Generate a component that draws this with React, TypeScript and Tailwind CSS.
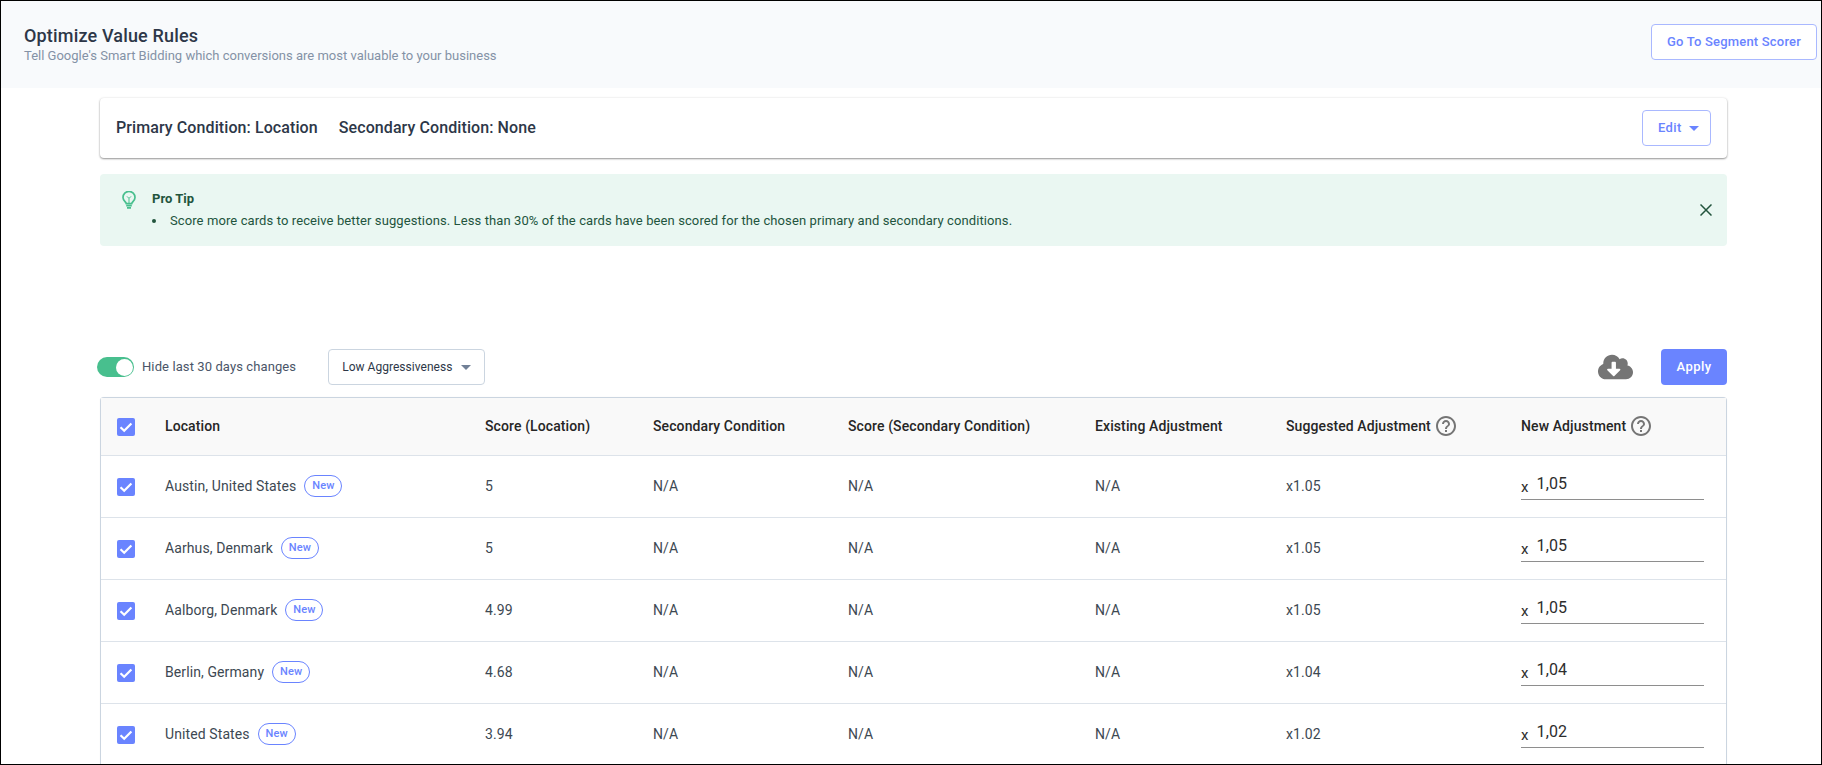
import React from "react";
import { FaCloudDownloadAlt } from "react-icons/fa";
import { MdHelpOutline } from "react-icons/md";

const rows = [
  { location: "Austin, United States", score: "5", suggested: "x1.05", value: "1,05" },
  { location: "Aarhus, Denmark", score: "5", suggested: "x1.05", value: "1,05" },
  { location: "Aalborg, Denmark", score: "4.99", suggested: "x1.05", value: "1,05" },
  { location: "Berlin, Germany", score: "4.68", suggested: "x1.04", value: "1,04" },
  { location: "United States", score: "3.94", suggested: "x1.02", value: "1,02" },
];

function Caret({ className }: { className: string }) {
  return (
    <svg viewBox="0 0 10 5" className={className} fill="currentColor">
      <path d="M0 0h10L5 5z" />
    </svg>
  );
}

function Checkbox() {
  return (
    <span className="flex h-[18px] w-[18px] items-center justify-center rounded-[2px] bg-[#6a84ff]">
      <svg viewBox="0 0 18 18" className="h-[18px] w-[18px]" fill="none" stroke="white" strokeWidth="2.2">
        <path d="M3.5 9.2l3.7 3.6 7.2-7.3" />
      </svg>
    </span>
  );
}

function BulbIcon() {
  return (
    <svg viewBox="0 0 14 18" className="mt-[1px] h-[18px] w-[14px] text-[#48bf8e]" fill="none" stroke="currentColor" strokeWidth="1.7">
      <path d="M4.3 12.6C4 10.9 1 9.7 1 6.4a6 6 0 0 1 12 0c0 3.3-3 4.5-3.3 6.2z" />
      <path d="M5 5.4L7 7.4l2-2M7 7.4v5" strokeWidth="1" />
      <path d="M4.2 14.7h5.6M5 16.8h4" strokeWidth="1.7" />
    </svg>
  );
}

export default function App() {
  return (
    <div className="box-border flex h-[765px] w-[1822px] flex-col overflow-hidden border border-black bg-white font-[family-name:Roboto,sans-serif] text-[#3d4852]">
      {/* Page header */}
      <header className="flex h-[87px] shrink-0 items-start justify-between bg-[#f8fafc] pr-1">
        <div className="pl-[23px] pt-[23px]">
          <h1 className="text-[18px] font-medium leading-[24px] tracking-[0.17px] text-[#2d3748]">Optimize Value Rules</h1>
          <p className="text-[13px] leading-[16px] text-[#8492a6]">
            Tell Google's Smart Bidding which conversions are most valuable to your business
          </p>
        </div>
        <button className="mt-[23px] h-[36px] w-[166px] rounded-[4px] border border-[#a9b8ff] bg-white text-[13px] font-medium tracking-[0.2px] text-[#6a84ff]">
          Go To Segment Scorer
        </button>
      </header>

      <main className="flex flex-1 flex-col pl-[99px] pr-[94px]">
        {/* Conditions */}
        <section className="mt-[10px] flex h-[60px] shrink-0 items-center justify-between rounded-[4px] bg-white pl-4 pr-4 shadow-[0_1px_2px_rgba(0,0,0,0.4),0_0_3px_rgba(0,0,0,0.08)]">
          <div className="flex gap-[21px] text-[16px] font-medium tracking-[0.09px] text-[#2d3748]">
            <span>Primary Condition: Location</span>
            <span>Secondary Condition: None</span>
          </div>
          <button className="flex h-[36px] w-[69px] items-center gap-[7px] rounded-[4px] border border-[#a9b8ff] pl-[15px] text-[13px] font-medium tracking-[0.4px] text-[#6a84ff]">
            Edit
            <Caret className="h-[5px] w-[10px]" />
          </button>
        </section>

        {/* Pro tip */}
        <section className="mt-[16px] flex h-[72px] shrink-0 items-center justify-between rounded-[4px] bg-[#eaf7f2] pl-[22px] pr-[15px] text-[#22543d]">
          <div className="flex gap-[16px] self-start pt-4">
            <BulbIcon />
            <div>
              <div className="text-[13px] font-bold leading-[18px]">Pro Tip</div>
              <ul className="mt-[4px] list-inside list-disc text-[13px] leading-[18px] tracking-[0.1px]">
                <li>Score more cards to receive better suggestions. Less than 30% of the cards have been scored for the chosen primary and secondary conditions.</li>
              </ul>
            </div>
          </div>
          <svg viewBox="0 0 12 12" className="h-3 w-3" fill="none" stroke="currentColor" strokeWidth="1.5">
            <path d="M0.5 0.5l11 11M11.5 0.5l-11 11" />
          </svg>
        </section>

        {/* Toolbar */}
        <div className="mt-[103px] flex h-[36px] shrink-0 items-center">
          <div className="-ml-[3px] flex items-center">
            <span className="flex h-[20px] w-[37px] items-center justify-end rounded-full bg-[#48bf8e] pr-[1px]">
              <span className="h-[17px] w-[17px] rounded-full bg-white" />
            </span>
            <span className="ml-2 text-[13px] tracking-[0.1px] text-[#4a5568]">Hide last 30 days changes</span>
          </div>
          <button className="ml-[32px] flex h-[36px] w-[157px] items-center justify-between whitespace-nowrap rounded-[4px] border border-[#cbd5e0] pl-[13px] pr-[13px] text-[12px] tracking-[0.03px] text-[#2d3748]">
            Low Aggressiveness
            <Caret className="h-[5px] w-[10px] text-[#718096]" />
          </button>
          <FaCloudDownloadAlt className="ml-auto h-[28px] w-[35px] text-[#757575]" />
          <button className="ml-[28px] h-[36px] w-[66px] rounded-[4px] bg-[#6a84ff] text-[13px] font-medium tracking-[0.4px] text-white">
            Apply
          </button>
        </div>

        {/* Table */}
        <div className="mt-[12px] rounded-t-[4px] border border-b-0 border-[#cbd5e0] shadow-[0_0_1px_rgba(0,0,0,0.1)]">
          <table className="w-full table-fixed border-collapse text-left text-[14px] tracking-[0.1px]">
            <colgroup>
              <col className="w-[64px]" />
              <col className="w-[320px]" />
              <col className="w-[168px]" />
              <col className="w-[195px]" />
              <col className="w-[247px]" />
              <col className="w-[191px]" />
              <col className="w-[235px]" />
              <col />
            </colgroup>
            <thead>
              <tr className="h-[57px] border-b border-[#dde3ea] bg-[#f9f9f9] text-[#262626]">
                <th className="pl-4 pt-[2px] font-normal"><Checkbox /></th>
                <th className="font-medium">Location</th>
                <th className="font-medium">Score (Location)</th>
                <th className="font-medium">Secondary Condition</th>
                <th className="font-medium">Score (Secondary Condition)</th>
                <th className="font-medium">Existing Adjustment</th>
                <th className="font-medium">
                  <span className="flex items-center gap-[3px]">Suggested Adjustment <MdHelpOutline className="h-[24px] w-[24px] text-[#757575]" /></span>
                </th>
                <th className="font-medium">
                  <span className="flex items-center gap-[3px]">New Adjustment <MdHelpOutline className="h-[24px] w-[24px] text-[#757575]" /></span>
                </th>
              </tr>
            </thead>
            <tbody>
              {rows.map((row) => (
                <tr key={row.location} className="h-[62px] border-b border-[#dde3ea]">
                  <td className="pl-4 pt-[2px]"><Checkbox /></td>
                  <td>
                    <span className="flex items-center gap-2">
                      {row.location}
                      <span className="flex h-[22px] w-[38px] items-center justify-center rounded-full border border-[#6a84ff] text-[11px] font-medium text-[#6a84ff]">New</span>
                    </span>
                  </td>
                  <td>{row.score}</td>
                  <td>N/A</td>
                  <td>N/A</td>
                  <td>N/A</td>
                  <td>{row.suggested}</td>
                  <td>
                    <div className="flex h-[28px] w-[183px] border-b border-[#8e8e8e] text-[#2d2d2d]">
                      <span className="mt-[4px] text-[15px]">x</span>
                      <span className="ml-[8px] text-[16px]">{row.value}</span>
                    </div>
                  </td>
                </tr>
              ))}
            </tbody>
          </table>
        </div>
      </main>
    </div>
  );
}
